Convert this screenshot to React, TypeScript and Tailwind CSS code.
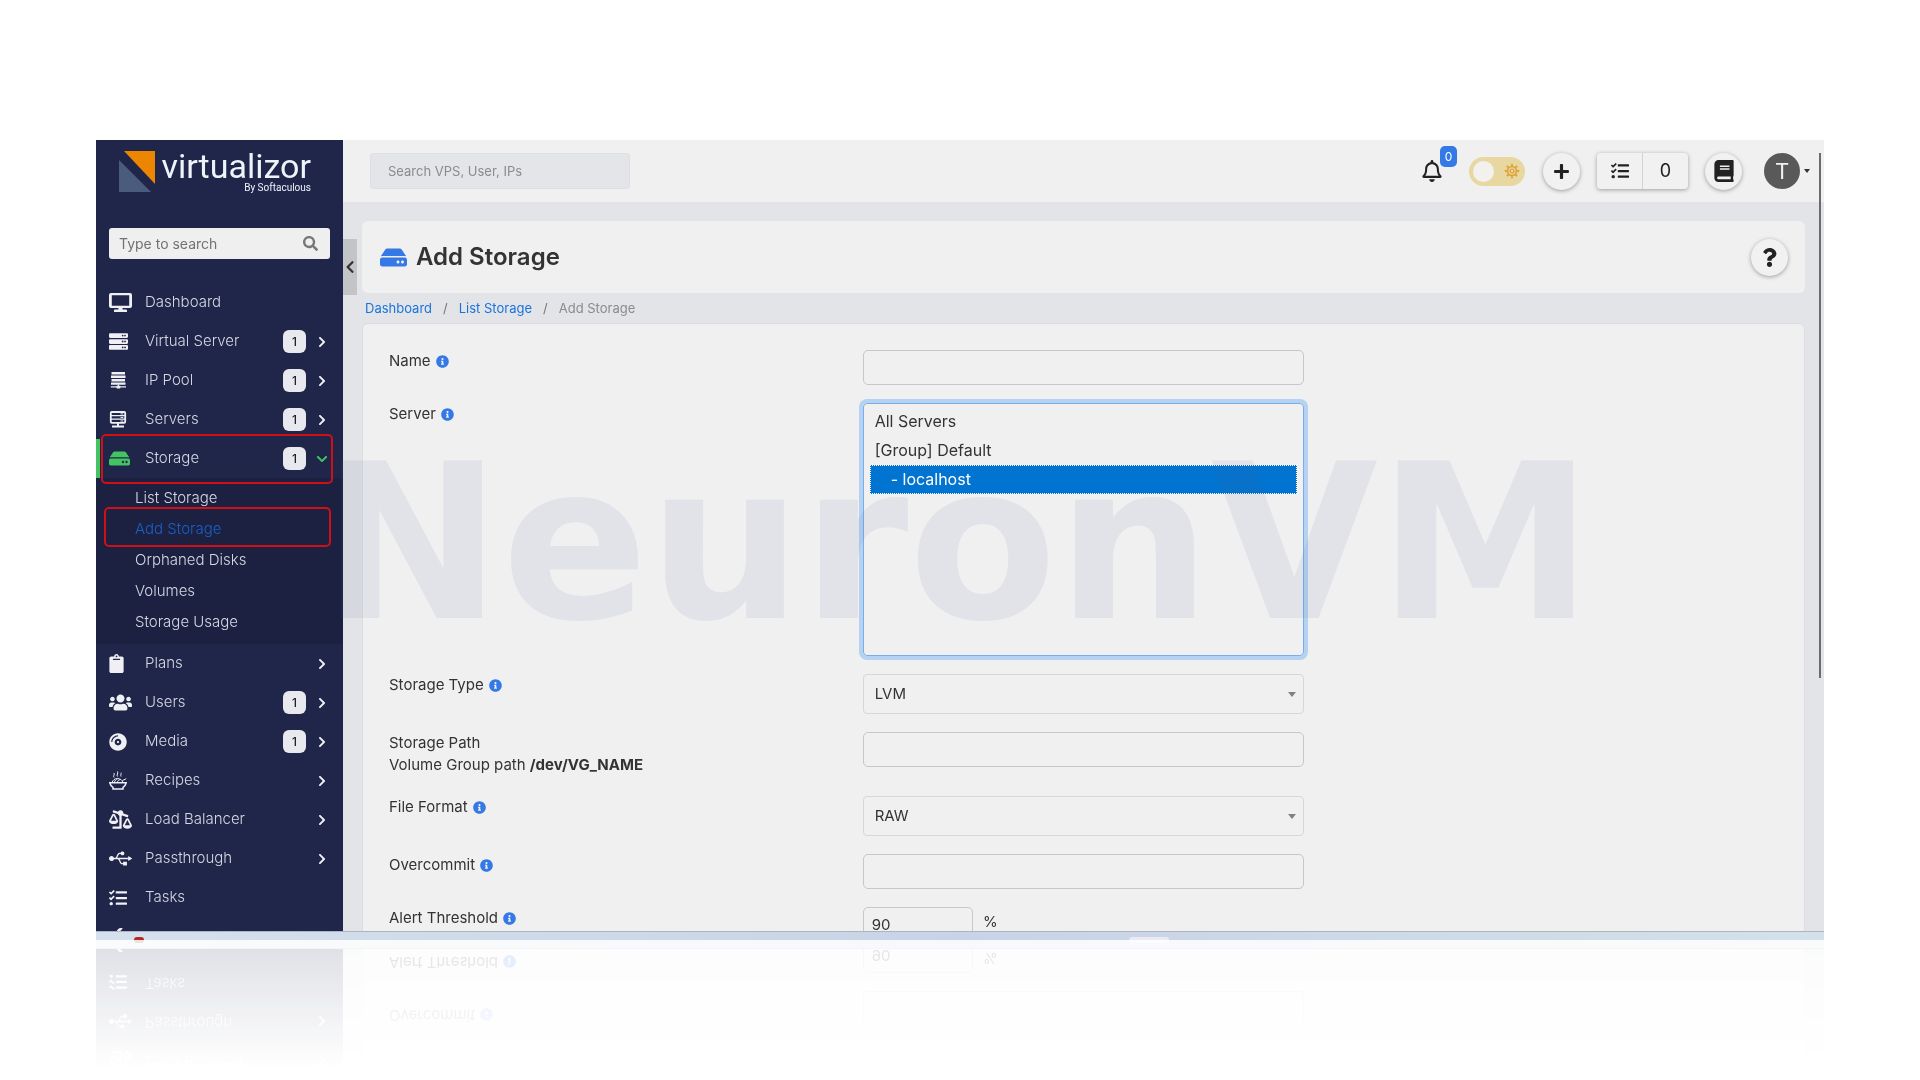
import type { ReactNode } from "react";
import {
  FaBalanceScaleRight,
  FaBook,
  FaChevronDown,
  FaChevronLeft,
  FaChevronRight,
  FaClipboard,
  FaCompactDisc,
  FaHdd,
  FaInfoCircle,
  FaPlus,
  FaQuestion,
  FaRegBell,
  FaSearch,
  FaServer,
  FaTasks,
  FaUsb,
  FaUsers,
  FaWrench,
} from "react-icons/fa";

interface NavItem {
  label: string;
  icon: ReactNode;
  count?: number;
  expandable?: boolean;
}

/** Icons the Font Awesome set has no match for */
function MonitorIcon() {
  return (
    <svg width="23" height="20" viewBox="0 0 23 20" fill="currentColor" aria-hidden="true">
      <path
        fillRule="evenodd"
        d="M2 0h19a2 2 0 0 1 2 2v11a2 2 0 0 1-2 2h-7.500v1.500H17a1 1 0 0 1 1 1V19H5v-1.500a1 1 0 0 1 1-1h3.500V15H2a2 2 0 0 1-2-2V2a2 2 0 0 1 2-2zm.800 2.200v10.500h17.400V2.200z"
      />
    </svg>
  );
}

function PoolIcon() {
  return (
    <svg width="19" height="17" viewBox="0 0 19 17" fill="currentColor" aria-hidden="true">
      <path d="M2.500 0h13.500v2.600H2.500zM2 3.500h14.500v2.600H2zM2.500 7h13.500v2.600H2.500zM2 10.500h14.500v2.300H2z" />
      <path d="M8.800 12.500h1.200v1.200h1.200v.600H17v1.200h-5.800v1H7.600v-1H1.800v-1.200h5.800v-.600h1.200z" />
    </svg>
  );
}

function RackIcon() {
  return (
    <svg width="18" height="17" viewBox="0 0 18 17" fill="none" stroke="currentColor" aria-hidden="true">
      <rect x="1.800" y="1" width="14.400" height="10.800" rx="1" strokeWidth="1.800" />
      <path d="M2 4.600h14M2 8.200h14" strokeWidth="1.300" />
      <path d="M11.500 2.900h2.800M11.500 6.400h2.800M11.500 10h2.800" strokeWidth="1" />
      <path d="M9 11.500v3M3 15.400h12" strokeWidth="2" />
    </svg>
  );
}

function NoodlesIcon() {
  return (
    <svg width="18" height="19" viewBox="0 0 18 19" fill="none" stroke="currentColor" aria-hidden="true">
      <path d="M5 6.500c-1.200-1.800 1-2.600 0-4.500M8.500 5.500c-1.200-1.800 1-3 0-5M12 5.500c-.800-1.500.600-2.300 0-3.800" strokeWidth="1" />
      <path d="M3 11.500c1-2.600 2.600-3.800 5.500-4 3 .200 4.500 1.400 5.500 4M5.500 11c.600-1.800 1.600-2.600 3-3M8.500 11c.200-1.200 1.200-2 2.500-2.300M13.500 9.500l3.800-1.800" strokeWidth="1" />
      <path d="M.800 11.800h16.400c-.500 2.200-1.700 3.600-3.200 4.600v1.600H4v-1.600C2.500 15.400 1.300 14 .800 11.800z" strokeWidth="1.500" />
    </svg>
  );
}

function SunIcon() {
  return (
    <svg width="16" height="16" viewBox="0 0 16 16" fill="none" stroke="currentColor" aria-hidden="true">
      <circle cx="8" cy="8" r="4.500" strokeWidth="1.600" />
      <circle cx="8" cy="8" r="2" strokeWidth="1.200" />
      <path
        d="M8 .800v2M8 13.200v2M.800 8h2M13.200 8h2M2.900 2.900l1.500 1.500M11.600 11.600l1.500 1.500M2.900 13.100l1.500-1.500M11.600 4.400l1.500-1.500"
        strokeWidth="1.800"
      />
    </svg>
  );
}

const MAIN_NAV: NavItem[] = [
  { label: "Dashboard", icon: <MonitorIcon /> },
  { label: "Virtual Server", icon: <FaServer size={19} />, count: 1, expandable: true },
  { label: "IP Pool", icon: <PoolIcon />, count: 1, expandable: true },
  { label: "Servers", icon: <RackIcon />, count: 1, expandable: true },
];

const STORAGE_LINKS = ["List Storage", "Add Storage", "Orphaned Disks", "Volumes", "Storage Usage"];

const LOWER_NAV: NavItem[] = [
  { label: "Plans", icon: <FaClipboard size={19} className="-ml-0.5" />, expandable: true },
  { label: "Users", icon: <FaUsers size={23} />, count: 1, expandable: true },
  { label: "Media", icon: <FaCompactDisc size={18} />, count: 1, expandable: true },
  { label: "Recipes", icon: <NoodlesIcon />, expandable: true },
  { label: "Load Balancer", icon: <FaBalanceScaleRight size={23} />, expandable: true },
  { label: "Passthrough", icon: <FaUsb size={23} />, expandable: true },
  { label: "Tasks", icon: <FaTasks size={18} /> },
];

function Count({ value }: { value: number }) {
  return (
    <span className="mr-2.5 flex h-[23px] w-[23px] items-center justify-center rounded-md bg-[#e8e9ef] text-xs font-medium text-[#222]">
      {value}
    </span>
  );
}

function NavRow({ item }: { item: NavItem }) {
  return (
    <li>
      <a href="#" className="flex h-[39px] items-center pr-[15px] pl-[13px]">
        <span className="flex w-9 shrink-0 items-center text-[#f0f0f4]">{item.icon}</span>
        <span className="flex-1">{item.label}</span>
        {item.count !== undefined && <Count value={item.count} />}
        {item.expandable && <FaChevronRight size={12} className="text-[#f0f0f4]" />}
      </a>
    </li>
  );
}

function Sidebar() {
  return (
    <aside className="w-[247px] shrink-0 overflow-hidden bg-[#1f264a] text-[15px] font-light text-[#d5d7e2]">
      {/* Logo */}
      <div className="flex h-[88px] pt-[11px] pl-[23px]">
        <svg width="37" height="41" viewBox="0 0 37 41" aria-hidden="true">
          <path d="M5 0h31v33z" fill="#ec8500" />
          <path d="M0 9v32h32z" fill="#4a5b7e" />
        </svg>
        <div className="flex w-[155px] flex-col items-end font-[Roboto,sans-serif] font-normal text-[#eef3fa]">
          <span className="text-[34px] leading-[31px]">virtualizor</span>
          <span className="text-[10px] leading-[12px]">By Softaculous</span>
        </div>
      </div>

      <div className="mx-[13px] flex h-[31px] items-center rounded-[3px] bg-[#efefef] pr-3 pl-2.5">
        <input
          type="text"
          aria-label="Type to search"
          placeholder="Type to search"
          className="min-w-0 flex-1 bg-transparent text-sm font-normal text-[#333] outline-none placeholder:text-[#707276]"
        />
        <FaSearch size={15} className="text-[#777]" />
      </div>

      <nav className="mt-6">
        <ul>
          {MAIN_NAV.map((item) => (
            <NavRow key={item.label} item={item} />
          ))}
          <li>
            <a
              href="#"
              className="relative flex h-[39px] items-center border-l-4 border-[#43c463] pr-[15px] pl-[9px]"
            >
              <span className="flex w-9 shrink-0 items-center text-[#43c463]">
                <FaHdd size={21} />
              </span>
              <span className="flex-1">Storage</span>
              <Count value={1} />
              <FaChevronDown size={12} className="text-[#43c463]" />
              <span className="absolute -top-[5px] right-2.5 -bottom-1.5 left-px rounded-[5px] border-2 border-[#d01016]" />
            </a>
            <ul className="bg-[#1c2142] pt-[5px] pb-1.5">
              {STORAGE_LINKS.map((label) => (
                <li key={label}>
                  <a
                    href="#"
                    className={
                      label === "Add Storage"
                        ? "relative flex h-[31px] items-center pl-[39px] text-[#1c5fc4]"
                        : "flex h-[31px] items-center pl-[39px]"
                    }
                  >
                    {label}
                    {label === "Add Storage" && (
                      <span className="absolute -top-[7px] right-3 -bottom-0.5 left-2 rounded-[5px] border-2 border-[#d01016]" />
                    )}
                  </a>
                </li>
              ))}
            </ul>
          </li>
          {LOWER_NAV.map((item) => (
            <NavRow key={item.label} item={item} />
          ))}
          <NavRow item={{ label: "", icon: <FaWrench size={17} /> }} />
        </ul>
      </nav>
    </aside>
  );
}

function TopBar() {
  const raised = "bg-[#f1f1f1] text-[#222] shadow-[0_1px_4px_rgba(0,0,0,0.35)]";
  return (
    <header className="flex h-[62px] shrink-0 items-center bg-[#f0f0f0] pr-3.5 pl-[27px]">
      <input
        type="text"
        aria-label="Search VPS, User, IPs"
        placeholder="Search VPS, User, IPs"
        className="h-9 w-[260px] rounded-[3px] border border-[#dddfe3] bg-[#e4e5e8] px-[17px] text-[13px] outline-none placeholder:text-[#8b8b8e]"
      />
      <div className="ml-auto flex items-center">
        <button type="button" aria-label="Notifications" className="relative mr-[26px] text-[#222]">
          <FaRegBell size={22} />
          <span className="absolute -top-3.5 left-[19px] flex h-[21px] w-[17px] items-center justify-center rounded-[5px] bg-[#3479e6] text-xs text-white">
            0
          </span>
        </button>
        <button
          type="button"
          role="switch"
          aria-checked="false"
          aria-label="Dark mode"
          className="mr-[18px] flex h-[29px] w-14 items-center justify-between rounded-full bg-[#e8d7a0] pr-[5px] pl-1 text-[#dfa034]"
        >
          <span className="h-[21px] w-[21px] rounded-full bg-[#f2f1ee]" />
          <SunIcon />
        </button>
        <button
          type="button"
          aria-label="Create"
          className={`mr-[17px] flex h-[37px] w-[37px] items-center justify-center rounded-full ${raised}`}
        >
          <FaPlus size={17} />
        </button>
        <div className={`mr-[17px] flex h-9 rounded ${raised}`}>
          <button
            type="button"
            aria-label="Tasks"
            className="flex w-[46px] items-center justify-center border-r border-[#d2d2d2]"
          >
            <FaTasks size={18} />
          </button>
          <button type="button" className="w-[45px] text-lg">
            0
          </button>
        </div>
        <button
          type="button"
          aria-label="Documentation"
          className={`mr-[22px] flex h-[37px] w-[37px] items-center justify-center rounded-full ${raised}`}
        >
          <FaBook size={22} />
        </button>
        <button type="button" aria-label="Account" className="flex items-center gap-1">
          <span className="flex h-9 w-9 items-center justify-center rounded-full bg-[#595959] text-[22px] text-[#f0f0f0]">
            T
          </span>
          <span className="border-x-[3px] border-t-4 border-x-transparent border-t-[#333]" />
        </button>
      </div>
    </header>
  );
}

function Info() {
  return <FaInfoCircle size={13} className="text-[#3479e6]" />;
}

interface FieldProps {
  id: string;
  label: string;
  info?: boolean;
  note?: ReactNode;
  children: ReactNode;
}

function Field({ id, label, info = true, note, children }: FieldProps) {
  return (
    <div className="grid grid-cols-3">
      <div className="px-4 leading-[22px]">
        <label htmlFor={id} className="flex items-center gap-[5px]">
          {label}
          {info && <Info />}
        </label>
        {note}
      </div>
      <div className="px-4">{children}</div>
    </div>
  );
}

const INPUT = "block h-[35px] w-full rounded-[5px] border border-[#c6c7ca] bg-transparent px-2 outline-none";

function Dropdown({ id, value }: { id: string; value: string }) {
  return (
    <div className="relative">
      <select
        id={id}
        className="block h-10 w-full appearance-none rounded border border-[#d6d7da] bg-transparent px-[11px] outline-none"
      >
        <option>{value}</option>
      </select>
      <span className="pointer-events-none absolute top-[18px] right-2 border-x-4 border-t-[5px] border-x-transparent border-t-[#808080]" />
    </div>
  );
}

function StorageForm() {
  return (
    <form className="flex flex-1 flex-col gap-[18px] rounded-t-md border border-[#dcdde0] bg-[#f0f0f0] px-2.5 pt-[26px] text-[15px] text-[#333]">
      <Field id="name" label="Name">
        <input id="name" type="text" className={INPUT} />
      </Field>
      <Field id="server" label="Server">
        <select
          id="server"
          multiple
          defaultValue={["localhost"]}
          className="block h-[253px] w-full overflow-hidden rounded border border-[#78aeea] bg-transparent px-1.5 py-[3px] text-base shadow-[0_0_0_4px_#b5d2f2] outline-none"
        >
          <option value="all" className="h-[29px] px-[5px] pt-1">
            All Servers
          </option>
          <option value="group" className="h-[29px] px-[5px] pt-1">
            [Group] Default
          </option>
          <option
            value="localhost"
            className="h-[29px] border border-dotted border-white bg-[linear-gradient(#0074d0,#0074d0)] px-5 pt-[3px] [-webkit-text-fill-color:white]"
          >
            - localhost
          </option>
        </select>
      </Field>
      <Field id="type" label="Storage Type">
        <Dropdown id="type" value="LVM" />
      </Field>
      <Field
        id="path"
        label="Storage Path"
        info={false}
        note={
          <p className="pb-0.5">
            Volume Group path <b>/dev/VG_NAME</b>
          </p>
        }
      >
        <input id="path" type="text" className={INPUT} />
      </Field>
      <Field id="format" label="File Format">
        <Dropdown id="format" value="RAW" />
      </Field>
      <Field id="overcommit" label="Overcommit">
        <input id="overcommit" type="text" className={INPUT} />
      </Field>
      <Field id="threshold" label="Alert Threshold">
        <div className="flex gap-2.5">
          <div className="w-1/4">
            <input id="threshold" type="text" defaultValue="90" className={INPUT} />
          </div>
          <span className="pt-1">%</span>
        </div>
      </Field>
    </form>
  );
}

export default function App() {
  return (
    <div className="flex h-screen flex-col overflow-hidden bg-white px-24 py-[140px] font-[Inter,sans-serif]">
      <div className="relative flex min-h-0 flex-1 flex-col overflow-hidden [-webkit-box-reflect:below_0px_linear-gradient(transparent_84%,rgba(0,0,0,0.15))]">
        <div className="relative flex min-h-0 flex-1 overflow-hidden">
          <Sidebar />
          <div className="flex min-w-0 flex-1 flex-col bg-[#e3e4e7]">
            <TopBar />
            <main className="relative flex min-h-0 flex-1 flex-col overflow-hidden px-[19px]">
              <button
                type="button"
                aria-label="Collapse sidebar"
                className="absolute top-[37px] left-0 flex h-14 w-3.5 items-center justify-center bg-[#c3c4c7] text-[#333]"
              >
                <FaChevronLeft size={14} />
              </button>
              <div className="mt-[19px] flex h-[72px] shrink-0 items-center rounded-md bg-[#f0f0f0] pr-[17px] pl-[18px]">
                <FaHdd size={27} className="mr-[9px] text-[#3479e6]" />
                <h1 className="text-2xl font-semibold text-[#333]">Add Storage</h1>
                <button
                  type="button"
                  aria-label="Help"
                  className="ml-auto flex h-[37px] w-[37px] items-center justify-center rounded-full bg-[#f1f1f1] text-[#222] shadow-[0_1px_4px_rgba(0,0,0,0.35)]"
                >
                  <FaQuestion size={19} />
                </button>
              </div>
              <nav className="flex h-[30px] shrink-0 items-center gap-[11px] pt-px pl-[3px] text-[13px] text-[#777]">
                <a href="#" className="text-[#1a73dc]">
                  Dashboard
                </a>
                <span>/</span>
                <a href="#" className="text-[#1a73dc]">
                  List Storage
                </a>
                <span>/</span>
                <span className="text-[#8b8b8e]">Add Storage</span>
              </nav>
              <StorageForm />
            </main>
          </div>

          {/* Watermark */}
          <div className="pointer-events-none absolute top-[274px] left-[225px] font-['DejaVu_Sans',sans-serif] text-[216px] leading-[260px] font-bold text-[#5a6496]/9">
            NeuronVM
          </div>

          {/* Scrollbar thumb */}
          <div className="absolute top-[13px] right-[3px] h-[525px] w-0.5 bg-[#6b6b6b]" />
        </div>

        {/* Top edge of the desktop taskbar */}
        <div className="flex h-[9px] shrink-0 items-end overflow-hidden border-t border-[#b0b4c2] bg-linear-to-r from-[#d5e1ec] via-[#c8d3e7] to-[#d3e1e9]">
          <span className="ml-[38px] h-[3px] w-2.5 rounded-t-full bg-[#b02a2a]" />
          <span className="ml-[57%] h-[3px] w-10 rounded-t-md bg-[#ece8f5]" />
        </div>
      </div>
    </div>
  );
}
